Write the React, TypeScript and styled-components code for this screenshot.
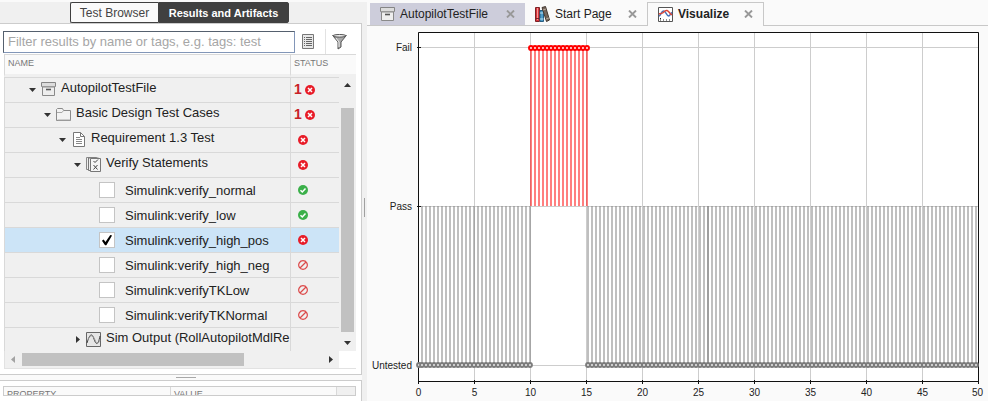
import React, { useState } from "react";
import styled, { createGlobalStyle, css } from "styled-components";

const line = "#cccccc";
const rowLine = "#d9d9d9";
const shade = "#f0f0f0";
const pale = "#fafafa";

const GlobalStyle = createGlobalStyle`
  * { box-sizing: border-box; }
  body {
    margin: 0;
    background: ${pale};
    color: #222;
    font-family: "Liberation Sans", Arial, sans-serif;
    font-size: 13px;
  }
  button, input { font: inherit; color: inherit; }
  button { border: 0; padding: 0; background: none; cursor: pointer; }
  svg { display: block; }
`;

const Page = styled.div`
  display: flex;
  height: 100vh;
  min-height: 390px;
  overflow: hidden;
`;

const Sidebar = styled.aside`
  flex: 0 0 362px;
  display: flex;
  flex-direction: column;
  min-height: 0;
`;

const ModeBar = styled.div`
  display: flex;
  height: 23px;
  border-top: 2px solid ${pale};
  padding-left: 70px;
  background: ${shade};
`;

const ModeButton = styled.button<{ $on?: boolean }>`
  height: 21px;
  width: ${(p) => (p.$on ? "131px" : "88px")};
  white-space: nowrap;
  border: 1px solid #404040;
  border-right-width: ${(p) => (p.$on ? "1px" : "0")};
  border-radius: ${(p) => (p.$on ? "0 2px 2px 0" : "2px 0 0 2px")};
  background: ${(p) => (p.$on ? "#404040" : pale)};
  color: ${(p) => (p.$on ? "#fff" : "#444")};
  font-size: ${(p) => (p.$on ? "11px" : "12px")};
  font-weight: ${(p) => (p.$on ? 700 : 400)};
`;

const Panel = styled.section`
  flex: none;
  border: 1px solid ${line};
  border-left: 0;
  background: #fff;
  padding: 5px 5px 5px 3px;
`;

const FilterRow = styled.div`
  display: flex;
  align-items: center;
  height: 25px;
`;

const FilterInput = styled.input`
  flex: 1;
  min-width: 0;
  height: 22px;
  border: 1px solid #8296b8;
  border-top-color: #55606e;
  border-left-color: #55606e;
  padding: 0 4px;
  background: #fff;
  font-size: 13px;
  outline: none;
  &::placeholder { color: #a6a6a6; opacity: 1; }
`;

const ToolButton = styled.button`
  width: 30px;
  height: 25px;
  padding-right: 4px;
  display: grid;
  place-items: center;
  & + & {
    width: 31px;
    border-left: 1px solid #e2e2e2;
  }
`;

const TreeFrame = styled.div`
  display: grid;
  grid-template-columns: minmax(0, 1fr) 17px;
  margin-left: 1px;
  border-bottom: 1px solid #e2e2e2;
`;

const TreeTable = styled.table`
  width: 100%;
  table-layout: fixed;
  border-collapse: separate;
  border-spacing: 0;
  background: ${shade};
`;

const StatusCol = styled.col`
  width: 49px;
`;

const HeadCell = styled.th`
  height: 23px;
  padding: 0 3px 3px;
  border-top: 1px solid ${rowLine};
  border-left: 1px solid ${rowLine};
  border-bottom: 3px solid ${shade};
  background: ${pale};
  color: #777;
  font-size: 9px;
  line-height: 12px;
  font-weight: 400;
  text-align: left;
`;

const Row = styled.tr<{ $selected?: boolean }>`
  background: ${(p) => (p.$selected ? "#cce4f7" : "transparent")};
`;

const Cell = styled.td`
  height: 25px;
  padding: 0;
  vertical-align: top;
  border-top: 1px solid ${rowLine};
  border-left: 1px solid ${rowLine};
  overflow: hidden;
  tr:last-child & { height: 24px; }
`;

const Branch = styled.div<{ $level: number }>`
  display: grid;
  grid-template-columns: 8px 15px auto;
  justify-content: start;
  align-items: center;
  column-gap: 5px;
  padding-left: ${(p) => 23 + p.$level * 15}px;
  height: 22px;
  line-height: 20px;
  white-space: nowrap;
`;

const NodeName = styled.span`
  padding-bottom: 2px;
`;

const Toggle = styled.button`
  width: 9px;
  height: 15px;
  display: grid;
  place-items: center;
`;

const Leaf = styled.label`
  display: flex;
  align-items: center;
  gap: 10px;
  height: 24px;
  padding-left: 94px;
  white-space: nowrap;
`;

const Check = styled.input`
  appearance: none;
  margin: 0;
  width: 16px;
  height: 16px;
  border: 1px solid #c4c4c4;
  background: #fff;
  display: grid;
  place-items: center;
  &:checked::before {
    content: "";
    width: 11px;
    height: 11px;
    background: #000;
    clip-path: polygon(4% 56%, 20% 46%, 36% 68%, 80% 4%, 96% 10%, 44% 98%, 32% 98%);
  }
`;

const StatusBox = styled.div`
  display: flex;
  align-items: center;
  gap: 4px;
  height: 22px;
  padding: 2px 0 0 3px;
  svg { flex: none; }
`;

const Single = styled(StatusBox)`
  padding-left: 7px;
`;

const Count = styled.strong`
  color: #c82127;
  font-size: 14px;
  line-height: 14px;
  padding-bottom: 3px;
  width: 7px;
`;

const VScroll = styled.div`
  display: flex;
  flex-direction: column;
  background: ${shade};
`;

const VCap = styled.div`
  height: 20px;
  margin-bottom: 3px;
  background: ${pale};
  border-top: 1px solid ${rowLine};
`;

const ScrollButton = styled.button`
  flex: none;
  width: 17px;
  height: 17px;
  display: grid;
  place-items: center;
`;

const VTrack = styled.div`
  flex: 1;
  display: flex;
  padding: 14px 2px 2px;
`;

const Thumb = styled.div`
  flex: 1;
  background: #c1c1c1;
`;

const HScroll = styled.div`
  display: flex;
  background: ${shade};
  border-left: 1px solid #e2e2e2;
`;

const HTrack = styled.div`
  flex: 1;
  display: flex;
  padding: 2px 78px 2px 0;
`;

const HSplitter = styled.div`
  flex: none;
  height: 5px;
  display: grid;
  place-items: center;
  padding-left: 9px;
  background: ${pale};
`;

const HGrip = styled.div`
  width: 20px;
  height: 1px;
  background: #a8a8a8;
`;

const PropertyPanel = styled.section`
  flex: 1;
  min-height: 0;
  border: 1px solid ${line};
  border-left: 0;
  border-bottom: 0;
  background: #fff;
  padding: 5px 5px 0 3px;
`;

const PropertyClip = styled.div`
  height: 10px;
  overflow: hidden;
  border: 1px solid ${line};
  background: ${pale};
`;

const PropertyTable = styled.table`
  width: 100%;
  table-layout: fixed;
  border-collapse: separate;
  border-spacing: 0;
`;

const PropertyHead = styled.th<{ $w: string }>`
  width: ${(p) => p.$w};
  height: 16px;
  padding: 1px 3px 0;
  border-right: 1px solid ${rowLine};
  color: #777;
  font-size: 9px;
  line-height: 12px;
  font-weight: 400;
  text-align: left;
  vertical-align: top;
  &:last-child { border-right: 0; background: ${shade}; }
`;

const VSplitter = styled.div`
  flex: 0 0 5px;
  border-top: 2px solid ${pale};
  display: grid;
  place-items: center;
  padding-top: 12px;
  background: ${shade};
`;

const VGrip = styled.div`
  width: 1px;
  height: 19px;
  background: #a0a0a0;
`;

const Main = styled.main`
  flex: 1;
  min-width: 0;
  display: flex;
  flex-direction: column;
  overflow: hidden;
`;

const TabBar = styled.div`
  display: flex;
  height: 26px;
  padding-top: 2px;
  flex: none;
`;

const TabFill = styled.div<{ $grow?: boolean }>`
  flex: ${(p) => (p.$grow ? "1" : "0 0 3px")};
  border-bottom: 1px solid #c8c8c8;
`;

const Tab = styled.div<{ $kind: "tinted" | "plain" | "active" }>`
  display: flex;
  align-items: center;
  height: 24px;
  white-space: nowrap;
  font-size: 12px;
  border: 0 solid #c8c8c8;
  border-bottom-width: 1px;
  padding: 0 10px 0 10px;
  ${(p) =>
    p.$kind === "tinted" &&
    css`
      width: 155px;
      border-top: 1px solid ${pale};
      background: #cdcddb;
    `}
  ${(p) =>
    p.$kind === "plain" &&
    css`
      width: 122px;
    `}
  ${(p) =>
    p.$kind === "active" &&
    css`
      width: 117px;
      border-width: 1px 1px 0;
      padding-bottom: 1px;
      background: ${pale};
      font-weight: 700;
    `}
`;

const TabName = styled.button`
  flex: 1;
  display: flex;
  align-items: center;
  gap: 5px;
`;

const CloseButton = styled.button`
  display: block;
`;

const ChartBox = styled.div`
  flex: none;
  svg { width: 100%; height: auto; }
`;

const ArchiveIcon = () => (
  <svg width="15" height="14" viewBox="0 0 15 14">
    <path d="M1.500 5h12v8.500h-12z" fill="#eee" stroke="#8a8a8a" />
    <path d="M.5.5h14v4H.5z" fill="#dcdcdc" stroke="#858585" />
    <path d="M1 4.500h13" stroke="#999" />
    <path d="M5 7.500h5" stroke="#555" strokeWidth="1.600" />
  </svg>
);

const FolderIcon = () => (
  <svg width="15" height="13" viewBox="0 0 15 13">
    <path d="M.5 12.500V1.500L1.500.5h5l1 2h7v10z" fill="#f3f3f3" stroke="#8a8a8a" />
    <path d="M1 4.500h5l1.500-2" stroke="#aaa" fill="none" />
    <path d="M1.500 12h13" stroke="#a8a8a8" />
  </svg>
);

const PageIcon = () => (
  <svg width="15" height="15" viewBox="0 0 15 15">
    <path d="M2.500.5h7l4 4v10h-11z" fill="#fff" stroke="#777" />
    <path d="M9.500.5v4h4" fill="none" stroke="#777" />
    <path d="M5 5.500h4M5 7.500h6M5 9.500h6M5 11.500h6" stroke="#888" />
  </svg>
);

const VerifyIcon = () => (
  <svg width="15" height="15" viewBox="0 0 15 15">
    <path d="M.5.5h10v12h-10z" fill="#eee" stroke="#888" />
    <path d="M2.500 1h10v12.500h-10z" fill="#eee" stroke="#777" />
    <path d="M4.500 1.500h10v13h-10z" fill="#f5f5f5" stroke="#777" />
    <path d="M7.500 4l1.500 1.500L12 2.500M7.500 8l4 4.500M11.500 8l-4 4.500" fill="none" stroke="#444" />
  </svg>
);

const SignalIcon = () => (
  <svg width="15" height="15" viewBox="0 0 15 15">
    <path d="M.5.5h14v14H.5z" fill="#e6e6e6" stroke="#666" />
    <path d="M1 11C4 1 6 1 8 7s4 7 6-3" fill="none" stroke="#444" />
    <path d="M2 7c3-5 5-4 7 1s3 4 5 0" fill="none" stroke="#999" />
  </svg>
);

const BooksIcon = () => (
  <svg width="15" height="16" viewBox="0 0 15 16">
    <path d="M.5 1.500h4v14h-4z" fill="#d8353b" stroke="#7d2226" />
    <path d="M2.500 2v12" stroke="#f39a9a" />
    <path d="M.5 12.500h4" stroke="#7d2226" />
    <path d="M5 4.500h3.500v11H5z" fill="#4b9ac8" stroke="#285d80" />
    <path d="M5 7h3.500M5 13h3.500" stroke="#bde0f2" />
    <path d="M7 1.500L10.500.5l4 13.500-3 1.500z" fill="#75675d" stroke="#43372f" />
    <path d="M8 4l3-1M11 13l3-1" stroke="#b5a79a" />
  </svg>
);

const PlotIcon = () => (
  <svg width="15" height="15" viewBox="0 0 15 15">
    <path d="M.5.5h14v14H.5z" fill="#fff" stroke="#555" />
    <path d="M1 9c2 0 2-5 4.500-5s3 5 5 5 2-3 3.500-3.500" fill="none" stroke="#4470b8" strokeWidth="1.400" />
    <path d="M1 7c2-1 2 0 3.500-1S7 3 9 3.500 11 6 14 8" fill="none" stroke="#dc4434" strokeWidth="1.400" />
    <path d="M2 13h1M5 13h1M8 13h1M11 13h1M2 11.500h1" stroke="#222" />
  </svg>
);

const ListIcon = () => (
  <svg width="12" height="15" viewBox="0 0 12 15">
    <path d="M.5.5h11v14H.5z" fill="#e8e8e8" stroke="#777" />
    <path d="M2 3.500h1M4 3.500h6M2 5.500h1M4 5.500h6M2 7.500h1M4 7.500h6M2 9.500h1M4 9.500h6M2 11.500h1M4 11.500h6" stroke="#666" />
  </svg>
);

const FunnelIcon = () => (
  <svg width="15" height="16" viewBox="0 0 15 16">
    <path d="M.7 1.500L6 8v7l3-2V8l5.300-6.500z" fill="#aaa" stroke="#555" />
    <ellipse cx="7.500" cy="1.800" rx="6.500" ry="1.300" fill="#eee" stroke="#555" />
    <path d="M4 4l3 4v5" fill="none" stroke="#eee" />
  </svg>
);

const CloseIcon = () => (
  <svg width="9" height="8" viewBox="0 0 9 8">
    <path d="M1 .5l7 7M8 .5l-7 7" stroke="#989898" strokeWidth="1.900" />
  </svg>
);

const arrowPaths = {
  down: "M1 3h7L4.500 7z",
  up: "M1 6h7L4.500 2z",
  right: "M3 1v7l4-3.500z",
  left: "M6 1v7L2 4.500z",
};

const Arrow = ({ dir, fill = "#333" }: { dir: keyof typeof arrowPaths; fill?: string }) => (
  <svg width="9" height="9" viewBox="0 0 9 9">
    <path d={arrowPaths[dir]} fill={fill} />
  </svg>
);

type Status = "fail" | "pass" | "none";

const StatusIcon = ({ status }: { status: Status }) => (
  <svg width="10" height="10" viewBox="0 0 10 10" role="img" aria-label={status}>
    {status === "none" ? (
      <path d="M2 8L8 2M5 .7a4.300 4.300 0 1 0 .01 0z" fill="none" stroke="#dc4a4a" strokeWidth="1.200" />
    ) : (
      <>
        <circle cx="5" cy="5" r="5" fill={status === "fail" ? "#e81c28" : "#3bb04a"} />
        <path
          d={status === "fail" ? "M3 3l4 4M7 3L3 7" : "M2.500 5.200l1.800 1.800 3.200-3.600"}
          fill="none"
          stroke="#fff"
          strokeWidth="1.500"
        />
      </>
    )}
  </svg>
);

type Node = {
  name: string;
  level?: number;
  icon?: React.ReactNode;
  count?: number;
  status?: Status;
  closed?: boolean;
};

const nodes: Node[] = [
  { name: "AutopilotTestFile", level: 0, icon: <ArchiveIcon />, count: 1, status: "fail" },
  { name: "Basic Design Test Cases", level: 1, icon: <FolderIcon />, count: 1, status: "fail" },
  { name: "Requirement 1.3 Test", level: 2, icon: <PageIcon />, status: "fail" },
  { name: "Verify Statements", level: 3, icon: <VerifyIcon />, status: "fail" },
  { name: "Simulink:verify_normal", status: "pass" },
  { name: "Simulink:verify_low", status: "pass" },
  { name: "Simulink:verify_high_pos", status: "fail" },
  { name: "Simulink:verify_high_neg", status: "none" },
  { name: "Simulink:verifyTKLow", status: "none" },
  { name: "Simulink:verifyTKNormal", status: "none" },
  { name: "Sim Output (RollAutopilotMdlRe", level: 3, icon: <SignalIcon />, closed: true },
];

const series = (from: number, to: number) => {
  const out: number[] = [];
  for (let x = from; x <= to; x += 4) out.push(x);
  return out;
};

const plot = { left: 51, right: 611, top: 6, bottom: 355, fail: 21, pass: 180, untested: 339 };
const untestedStems = [...series(55, 163), ...series(221, 609)];
const failStems = series(164, 220);
const levels: [string, number][] = [
  ["Fail", plot.fail],
  ["Pass", plot.pass],
  ["Untested", plot.untested],
];
const ticks = Array.from({ length: 11 }, (_, i) => i * 5);
const tickX = (t: number) => plot.left + 0.5 + (t * 56) / 5;

const Chart = () => (
  <svg viewBox="0 0 621 375" role="img" aria-label="Verify result over time" fontSize="10" fill="#222">
    <rect x={plot.left} y={plot.top} width={plot.right - plot.left} height={plot.bottom - plot.top} fill="#fff" />
    {ticks.map((t) => (
      <path key={t} d={`M${tickX(t)} ${plot.top}V${plot.bottom}`} stroke="#cdcdcd" />
    ))}
    {levels.map(([name, y]) => (
      <path key={name} d={`M${plot.left} ${y + 0.5}H${plot.right}`} stroke="#cdcdcd" />
    ))}
    <g stroke="#808080" strokeOpacity="0.5" strokeWidth="2">
      {[...untestedStems, 341].map((x, i) => (
        <path key={i} d={`M${x} ${plot.pass}V${plot.untested}`} />
      ))}
    </g>
    <g stroke="#ff0000" strokeOpacity="0.5" strokeWidth="2">
      {failStems.map((x) => (
        <path key={x} d={`M${x} ${plot.fail + 1}V${plot.pass}`} />
      ))}
    </g>
    <path
      d={`M${plot.left + 0.5} ${plot.top + 0.5}H${plot.right + 0.5}V${plot.bottom + 0.5}H${plot.left + 0.5}z`}
      fill="none"
      stroke="#111"
    />
    {ticks.map((t) => (
      <path key={t} d={`M${tickX(t)} ${plot.bottom - 1}v4`} stroke="#111" />
    ))}
    {levels.map(([name, y]) => (
      <path key={name} d={`M${plot.left - 1} ${y + 0.5}h4`} stroke="#111" />
    ))}
    <g fill="#e0e0e0" stroke="#7c7c7c" strokeWidth="1.800">
      {[52, ...untestedStems].map((x) => (
        <circle key={x} cx={x} cy={plot.untested} r="2" />
      ))}
    </g>
    <g fill="#ffe0e0" stroke="#ff0000" strokeWidth="1.900">
      {failStems.map((x) => (
        <circle key={x} cx={x} cy={plot.fail + 1} r="2" />
      ))}
    </g>
    {levels.map(([name, y]) => (
      <text key={name} x="45" y={y + 4} textAnchor="end">
        {name}
      </text>
    ))}
    {ticks.map((t) => (
      <text key={t} x={t === 50 ? 616 : tickX(t)} y="370" textAnchor={t === 50 ? "end" : "middle"}>
        {t}
      </text>
    ))}
  </svg>
);

export default function App() {
  const [checked, setChecked] = useState("Simulink:verify_high_pos");

  return (
    <>
      <GlobalStyle />
      <Page>
        <Sidebar>
          <ModeBar>
            <ModeButton>Test Browser</ModeButton>
            <ModeButton $on>Results and Artifacts</ModeButton>
          </ModeBar>
          <Panel>
            <FilterRow>
              <FilterInput aria-label="Filter results" placeholder="Filter results by name or tags, e.g. tags: test" />
              <ToolButton aria-label="Columns"><ListIcon /></ToolButton>
              <ToolButton aria-label="Filter"><FunnelIcon /></ToolButton>
            </FilterRow>
            <TreeFrame>
              <TreeTable>
                <colgroup>
                  <col />
                  <StatusCol />
                </colgroup>
                <thead>
                  <tr>
                    <HeadCell>NAME</HeadCell>
                    <HeadCell>STATUS</HeadCell>
                  </tr>
                </thead>
                <tbody>
                  {nodes.map((n) => (
                    <Row key={n.name} $selected={checked === n.name}>
                      <Cell>
                        {n.level === undefined ? (
                          <Leaf>
                            <Check
                              type="checkbox"
                              checked={checked === n.name}
                              onChange={(e) => setChecked(e.target.checked ? n.name : "")}
                            />
                            {n.name}
                          </Leaf>
                        ) : (
                          <Branch $level={n.level}>
                            <Toggle aria-label={`Toggle ${n.name}`}>
                              <Arrow dir={n.closed ? "right" : "down"} />
                            </Toggle>
                            {n.icon}
                            <NodeName>{n.name}</NodeName>
                          </Branch>
                        )}
                      </Cell>
                      <Cell>
                        {n.status &&
                          (n.count ? (
                            <StatusBox>
                              <Count>{n.count}</Count>
                              <StatusIcon status={n.status} />
                            </StatusBox>
                          ) : (
                            <Single>
                              <StatusIcon status={n.status} />
                            </Single>
                          ))}
                      </Cell>
                    </Row>
                  ))}
                </tbody>
              </TreeTable>
              <VScroll>
                <VCap />
                <ScrollButton aria-label="Scroll up"><Arrow dir="up" /></ScrollButton>
                <VTrack><Thumb /></VTrack>
                <ScrollButton aria-label="Scroll down"><Arrow dir="down" /></ScrollButton>
              </VScroll>
              <HScroll>
                <ScrollButton aria-label="Scroll left"><Arrow dir="left" fill="#a3a3a3" /></ScrollButton>
                <HTrack><Thumb /></HTrack>
                <ScrollButton aria-label="Scroll right"><Arrow dir="right" /></ScrollButton>
              </HScroll>
            </TreeFrame>
          </Panel>
          <HSplitter><HGrip /></HSplitter>
          <PropertyPanel>
            <PropertyClip>
              <PropertyTable>
                <thead>
                  <tr>
                    <PropertyHead $w="167px">PROPERTY</PropertyHead>
                    <PropertyHead $w="auto">VALUE</PropertyHead>
                    <PropertyHead $w="18px" />
                  </tr>
                </thead>
              </PropertyTable>
            </PropertyClip>
          </PropertyPanel>
        </Sidebar>
        <VSplitter><VGrip /></VSplitter>
        <Main>
          <TabBar>
            <TabFill />
            <Tab $kind="tinted">
              <TabName><ArchiveIcon />AutopilotTestFile</TabName>
              <CloseButton aria-label="Close AutopilotTestFile"><CloseIcon /></CloseButton>
            </Tab>
            <Tab $kind="plain">
              <TabName><BooksIcon />Start Page</TabName>
              <CloseButton aria-label="Close Start Page"><CloseIcon /></CloseButton>
            </Tab>
            <Tab $kind="active">
              <TabName><PlotIcon />Visualize</TabName>
              <CloseButton aria-label="Close Visualize"><CloseIcon /></CloseButton>
            </Tab>
            <TabFill $grow />
          </TabBar>
          <ChartBox><Chart /></ChartBox>
        </Main>
      </Page>
    </>
  );
}
